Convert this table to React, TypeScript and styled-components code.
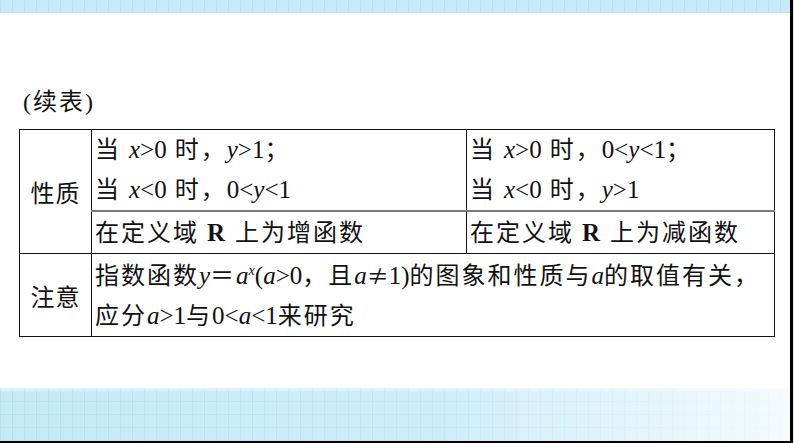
import React from 'react';
import styled, { createGlobalStyle } from 'styled-components';

const GlobalStyle = createGlobalStyle`
    html, body {
        margin: 0;
        padding: 0;
        background: #e6e6e6;
    }
`;

// light blue squared paper used for the top and bottom strips
const gridPaper = `
    repeating-linear-gradient(90deg, rgba(130, 195, 225, 0.22) 0 1px, transparent 1px 12px),
    repeating-linear-gradient(0deg, rgba(130, 195, 225, 0.18) 0 1px, transparent 1px 13px)
`;

const Frame = styled.div`
    box-sizing: border-box;
    width: 793px;
    height: 443px;
    background: #ffffff;
    border-right: 3px solid #000;
    border-bottom: 2px solid #000;
    display: flex;
    flex-direction: column;
    overflow: hidden;
`;

const TopStrip = styled.div`
    height: 13px;
    flex: none;
    background: ${gridPaper}, #c8ebf9;
`;

const BottomStrip = styled.div`
    height: 53px;
    flex: none;
    background:
        linear-gradient(90deg, rgba(255, 255, 255, 0) 0%, rgba(255, 255, 255, 0.15) 55%, rgba(255, 255, 255, 0.8) 100%),
        linear-gradient(180deg, rgba(255, 255, 255, 0.6) 0px, rgba(255, 255, 255, 0) 4px),
        ${gridPaper},
        #c6eaf8;
`;

const Main = styled.div`
    flex: 1;
    padding: 75px 0 0 19px;
    font-family: "Liberation Serif", "Noto Sans CJK SC", serif;
    color: #111;
`;

const Caption = styled.div`
    font-size: 24px;
    line-height: 28px;
    letter-spacing: 2px;
    margin: 0 0 13px 4px;
`;

const Table = styled.table`
    border-collapse: collapse;
    table-layout: fixed;
    width: 755px;
    font-size: 24px;
    letter-spacing: 2px;
`;

const Label = styled.td`
    border: 1px solid #111;
    text-align: center;
    vertical-align: middle;
    padding: 0;
    letter-spacing: 1px;
`;

const Cell = styled.td<{ $h: number; $divider?: boolean }>`
    border: 1px solid #111;
    border-bottom: ${p => (p.$divider ? '2px solid #7a7a7a' : '1px solid #111')};
    height: ${p => p.$h}px;
    padding: 0 0 0 3px;
    line-height: 40px;
    vertical-align: middle;
    white-space: nowrap;
`;

// latin maths runs are set tight, only the chinese text is spaced out
const M = styled.span`
    letter-spacing: 0;
    font-size: 25px;
`;

const V = styled.i`
    font-style: italic;
    font-family: "Liberation Serif", serif;
`;

const Sup = styled.sup`
    font-size: 14px;
    font-style: italic;
    line-height: 0;
    vertical-align: 9px;
`;

const Bold = styled.b`
    font-family: "Liberation Serif", serif;
    font-weight: bold;
    font-size: 25px;
`;

// the not-equal sign is the wide one from the chinese font
const Wide = styled.span`
    font-family: "Noto Sans CJK SC", sans-serif;
    font-size: 22px;
`;

export default function App() {
    return (
        <>
            <GlobalStyle />
            <Frame>
                <TopStrip />
                <Main>
                    <Caption>(续表)</Caption>
                    <Table>
                        <colgroup>
                            <col style={{ width: 72 }} />
                            <col style={{ width: 375 }} />
                            <col style={{ width: 308 }} />
                        </colgroup>
                        <tbody>
                            <tr>
                                <Label rowSpan={2}>性质</Label>
                                <Cell $h={80} $divider>
                                    当 <M><V>x</V>&gt;0</M> 时，<M><V>y</V>&gt;1</M>；<br />
                                    当 <M><V>x</V>&lt;0</M> 时，<M>0&lt;<V>y</V>&lt;1</M>
                                </Cell>
                                <Cell $h={80} $divider>
                                    当 <M><V>x</V>&gt;0</M> 时，<M>0&lt;<V>y</V>&lt;1</M>；<br />
                                    当 <M><V>x</V>&lt;0</M> 时，<M><V>y</V>&gt;1</M>
                                </Cell>
                            </tr>
                            <tr>
                                <Cell $h={41}>在定义域 <Bold>R</Bold> 上为增函数</Cell>
                                <Cell $h={41}>在定义域 <Bold>R</Bold> 上为减函数</Cell>
                            </tr>
                            <tr>
                                <Label>注意</Label>
                                <Cell $h={80} colSpan={2}>
                                    指数函数<M><V>y</V></M>＝<M><V>a</V><Sup>x</Sup>(<V>a</V>&gt;0</M>，且<M><V>a</V><Wide>≠</Wide>1)</M>的图象和性质与<M><V>a</V></M>的取值有关，<br />
                                    应分<M><V>a</V>&gt;1</M>与<M>0&lt;<V>a</V>&lt;1</M>来研究
                                </Cell>
                            </tr>
                        </tbody>
                    </Table>
                </Main>
                <BottomStrip />
            </Frame>
        </>
    );
}
